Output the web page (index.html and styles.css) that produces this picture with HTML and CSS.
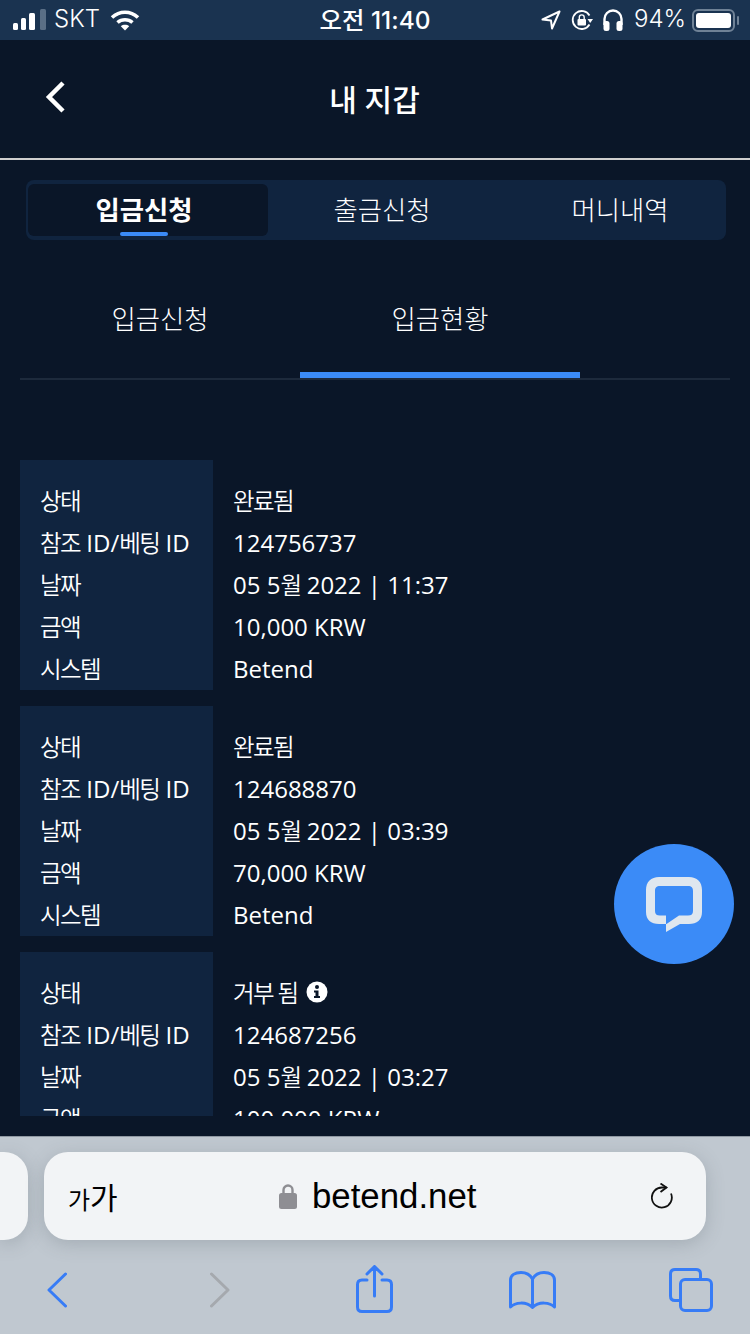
FILE: index.html
```html
<!DOCTYPE html>
<html lang="ko">
<head>
    <meta charset="UTF-8">
    <meta name="viewport" content="width=device-width, initial-scale=1.0">
    <title>내 지갑</title>
    <link rel="stylesheet" href="styles.css">
</head>
<body>
<div class="phone">

    <div class="status">
        <div class="status-left">
            <svg class="signal" width="33" height="22" viewBox="0 0 33 22">
                <rect x="0" y="14" width="5" height="7" rx="1.5" fill="#fff"/>
                <rect x="8" y="9" width="5" height="12" rx="1.5" fill="#fff"/>
                <rect x="16" y="4" width="6" height="17" rx="1.5" fill="#fff"/>
                <rect x="27" y="0" width="6" height="21" rx="1.5" fill="#5a6f86"/>
            </svg>
            <span>SKT</span>
            <svg width="30" height="22" viewBox="0 0 30 22" fill="none" stroke="#fff" stroke-width="3.6">
                <path d="M2 8.500C9.500 1.500 20.500 1.500 28 8.500"/>
                <path d="M7.500 13.500C11.800 9.800 18.200 9.800 22.500 13.500"/>
                <path d="M15 21.500L10.800 17.200C13.300 15.300 16.700 15.300 19.200 17.200Z" fill="#fff" stroke="none"/>
            </svg>
        </div>
        <div class="status-time">오전 11:40</div>
        <div class="status-right">
            <svg width="20" height="20" viewBox="0 0 20 20" fill="none" stroke="#fff" stroke-width="2" stroke-linejoin="round">
                <path d="M18.500 1.500L1.500 9.500L10 10.500L11 18.500Z"/>
            </svg>
            <svg class="rotlock" width="22" height="22" viewBox="0 0 22 22" fill="none">
                <path d="M18.500 6.500A9 9 0 1 0 18.500 15.500" stroke="#fff" stroke-width="1.800"/>
                <path d="M16.500 10L22 10L19.200 14Z" fill="#fff"/>
                <rect x="6.500" y="10" width="8.500" height="6.500" rx="1" fill="#fff"/>
                <path d="M8.300 10V8.300A2.400 2.400 0 0 1 13.200 8.300V10" stroke="#fff" stroke-width="1.400"/>
            </svg>
            <svg class="phones" width="20" height="22" viewBox="0 0 20 22" fill="none">
                <path d="M1.500 16V10A8.500 8.500 0 0 1 18.500 10V16" stroke="#fff" stroke-width="2.400"/>
                <rect x="0.500" y="12" width="6" height="10" rx="2.500" fill="#fff"/>
                <rect x="13.500" y="12" width="6" height="10" rx="2.500" fill="#fff"/>
            </svg>
            <span class="percent">94%</span>
            <div class="battery"><div class="battery-fill"></div></div>
        </div>
    </div>

    <div class="page">
        <div class="header">
            <svg class="header-back" width="20" height="32" viewBox="0 0 20 32" fill="none" stroke="#fff" stroke-width="4.500">
                <path d="M18 2L4 16L18 30"/>
            </svg>
            <h1>내 지갑</h1>
        </div>

        <div class="tabs">
            <div class="tab tab-active">입금신청</div>
            <div class="tab tab-second">출금신청</div>
            <div class="tab tab-third">머니내역</div>
        </div>

        <div class="subtabs">
            <div class="subtab">입금신청</div>
            <div class="subtab subtab-active">입금현황</div>
        </div>

        <div class="records">
            <div class="record">
                <div class="record-labels">
                    <div><span class="ko">상태</span></div>
                    <div><span class="ko">참조</span> ID/<span class="ko">베팅</span> ID</div>
                    <div><span class="ko">날짜</span></div>
                    <div><span class="ko">금액</span></div>
                    <div><span class="ko">시스템</span></div>
                </div>
                <div class="record-values">
                    <div><span class="ko">완료됨</span></div>
                    <div>124756737</div>
                    <div>05 5<span class="ko">월</span> 2022 | 11:37</div>
                    <div>10,000 KRW</div>
                    <div>Betend</div>
                </div>
            </div>
            <div class="record">
                <div class="record-labels">
                    <div><span class="ko">상태</span></div>
                    <div><span class="ko">참조</span> ID/<span class="ko">베팅</span> ID</div>
                    <div><span class="ko">날짜</span></div>
                    <div><span class="ko">금액</span></div>
                    <div><span class="ko">시스템</span></div>
                </div>
                <div class="record-values">
                    <div><span class="ko">완료됨</span></div>
                    <div>124688870</div>
                    <div>05 5<span class="ko">월</span> 2022 | 03:39</div>
                    <div>70,000 KRW</div>
                    <div>Betend</div>
                </div>
            </div>
            <div class="record">
                <div class="record-labels">
                    <div><span class="ko">상태</span></div>
                    <div><span class="ko">참조</span> ID/<span class="ko">베팅</span> ID</div>
                    <div><span class="ko">날짜</span></div>
                    <div><span class="ko">금액</span></div>
                    <div><span class="ko">시스템</span></div>
                </div>
                <div class="record-values">
                    <div class="with-icon"><span class="ko">거부 됨</span>
                        <svg width="22" height="22" viewBox="0 0 22 22">
                            <circle cx="11" cy="11" r="10.500" fill="#fff"/>
                            <circle cx="11" cy="6" r="2" fill="#0a1628"/>
                            <path d="M8 9.500H12.500V15H14V17H8V15H9.500V11.500H8Z" fill="#0a1628"/>
                        </svg>
                    </div>
                    <div>124687256</div>
                    <div>05 5<span class="ko">월</span> 2022 | 03:27</div>
                    <div>100,000 KRW</div>
                    <div>Betend</div>
                </div>
            </div>
        </div>

        <div class="chat">
            <svg width="56" height="56" viewBox="0 0 56 56">
                <path fill="#dfe7ef" fill-rule="evenodd" d="M13 0H43C51 0 56 5 56 13V35C56 43 51 47 43 47H34L20 55V47H13C5 47 0 43 0 35V13C0 5 5 0 13 0ZM14 9C10.500 9 9 10.500 9 14V34C9 37 10.500 38.500 14 38.500H20V47L20.500 47L33 38.500H42C45.500 38.500 47 37 47 34V14C47 10.500 45.500 9 42 9Z"/>
            </svg>
        </div>
    </div>

    <div class="browser">
        <div class="url-row">
            <div class="prev-pill"></div>
            <div class="url-pill">
                <div class="url-size"><small>가</small>가</div>
                <div class="url-host">
                    <svg width="18" height="26" viewBox="0 0 18 26" fill="none">
                        <path d="M4.500 11V7A4.500 4.500 0 0 1 13.500 7V11" stroke="#8e8e93" stroke-width="2.400"/>
                        <rect x="0" y="10" width="18" height="16" rx="2.500" fill="#8e8e93"/>
                    </svg>
                    <span>betend.net</span>
                </div>
                <svg width="22" height="26" viewBox="0 0 22 26" fill="none" stroke="#111" stroke-width="1.800">
                    <path d="M15.500 4.500H11A10 10 0 1 0 20 10.500"/>
                    <path d="M9.500 0.500L15.500 4.500L9.500 9"/>
                </svg>
            </div>
        </div>
        <div class="nav">
            <svg class="nav-back" width="20" height="36" viewBox="0 0 20 36" fill="none" stroke="#377cf6" stroke-width="3" stroke-linecap="round" stroke-linejoin="round">
                <path d="M18.500 2L2 18L18.500 34"/>
            </svg>
            <svg class="nav-next" width="20" height="36" viewBox="0 0 20 36" fill="none" stroke="#a5a9ae" stroke-width="3" stroke-linecap="round" stroke-linejoin="round">
                <path d="M1.500 2L18 18L1.500 34"/>
            </svg>
            <svg class="nav-share" width="37" height="48" viewBox="0 0 37 48" fill="none" stroke="#377cf6" stroke-width="3" stroke-linecap="round" stroke-linejoin="round">
                <path d="M11 15H6C3 15 1.500 16.500 1.500 19.500V42C1.500 45 3 46.500 6 46.500H31C34 46.500 35.500 45 35.500 42V19.500C35.500 16.500 34 15 31 15H26"/>
                <path d="M18.500 31V2M11 9L18.500 1.500L26 9"/>
            </svg>
            <svg class="nav-book" width="47" height="38" viewBox="0 0 47 38" fill="none" stroke="#377cf6" stroke-width="3" stroke-linejoin="round">
                <path d="M23.500 8C21 3.500 17 1.500 12 1.500C6 1.500 1.500 4 1.500 9V36C6 31.500 17 30 23.500 36.500C30 30 41 31.500 45.500 36V9C45.500 4 41 1.500 35 1.500C30 1.500 26 3.500 23.500 8V36"/>
            </svg>
            <svg class="nav-tabs" width="44" height="44" viewBox="0 0 44 44" fill="none" stroke="#377cf6" stroke-width="3">
                <path d="M10.500 32.500H6C3 32.500 1.500 31 1.500 28V6C1.500 3 3 1.500 6 1.500H27C30 1.500 31.500 3 31.500 6V10.500"/>
                <rect x="11.500" y="11.500" width="31" height="31" rx="4.500"/>
            </svg>
        </div>
    </div>

</div>
</body>
</html>
```

FILE: styles.css
```css
* {
    box-sizing: border-box;
}
body {
    margin: 0;
    background-color: #0a1628;
    color: #fff;
    font-family: "Open Sans", "Noto Sans CJK KR", sans-serif;
    font-size: 24px;
}
.phone {
    width: 750px;
    height: 1334px;
    display: flex;
    flex-direction: column;
    overflow: hidden;
}

/* status bar */
.status {
    height: 40px;
    flex: none;
    padding: 0 12px 0 13px;
    background-color: #1a3350;
    display: grid;
    grid-template-columns: 1fr auto 1fr;
    align-items: center;
    font-family: "Inter", "Noto Sans CJK KR", sans-serif;
    font-size: 24px;
}
.status-left {
    display: flex;
    align-items: center;
    gap: 8px;
}
.status-left span {
    margin-right: 2px;
    margin-bottom: 3px;
    font-weight: 300;
}
.status-time {
    font-size: 24.4px;
    font-weight: 500;
    white-space: nowrap;
    margin: 0 1px 3px 0;
}
.status-right {
    display: flex;
    align-items: center;
    justify-content: flex-end;
    gap: 10px;
}
.percent {
    font-weight: 300;
    margin-left: 1px;
    margin-right: -4px;
    margin-bottom: 3px;
}
.battery {
    width: 43px;
    height: 23px;
    margin-right: 3px;
    border: 2px solid #6f8296;
    border-radius: 6px;
    padding: 2px;
    position: relative;
}
.battery::after {
    content: "";
    position: absolute;
    right: -6px;
    top: 5px;
    width: 2px;
    height: 9px;
    border-radius: 1px;
    background-color: #6f8296;
}
.battery-fill {
    width: 35px;
    height: 15px;
    background-color: #fff;
    border-radius: 3px;
}

/* page */
.page {
    flex: 1;
    min-height: 0;
    position: relative;
    display: flex;
    flex-direction: column;
    overflow: hidden;
}
.header {
    height: 120px;
    flex: none;
    border-bottom: 2px solid #cfcfcf;
    display: flex;
    align-items: center;
    justify-content: center;
    position: relative;
}
.header-back {
    position: absolute;
    left: 45px;
    top: 41px;
}
.header h1 {
    margin: 0 0 0 -1px;
    font-size: 30px;
    font-weight: 500;
    padding-bottom: 2px;
}

.tabs {
    flex: none;
    margin: 20px 24px 0 26px;
    height: 60px;
    padding: 4px 0 4px 2px;
    background-color: #10243f;
    border-radius: 8px;
    display: flex;
    font-size: 26.4px;
    font-weight: 300;
}
.tab {
    display: flex;
    align-items: center;
    justify-content: center;
    padding-bottom: 4px;
}
.tab-active {
    width: 240px;
    padding-right: 8px;
    background-color: #0a1628;
    border-radius: 6px;
    font-weight: 700;
    position: relative;
}
.tab-active::after {
    content: "";
    position: absolute;
    left: 92px;
    bottom: 0;
    width: 48px;
    height: 4px;
    border-radius: 2px;
    background-color: #3b8bf7;
}
.tab-second {
    width: 228px;
}
.tab-third {
    flex: 1;
    padding-left: 18px;
}

.subtabs {
    flex: none;
    margin: 20px 20px 0;
    display: flex;
    border-bottom: 2px solid #1d2a3c;
    font-size: 26.4px;
    font-weight: 300;
}
.subtab {
    width: 280px;
    height: 118px;
    padding: 4px 0 2px;
    border-bottom: 6px solid transparent;
    display: flex;
    align-items: center;
    justify-content: center;
}
.subtab-active {
    border-bottom-color: #3b8bf7;
}

.records {
    flex: none;
    height: 656px;
    margin: 80px 20px 0;
    overflow: hidden;
}
.ko {
    font-size: 23.5px;
    font-weight: 350;
    letter-spacing: -1.6px;
}
.record {
    display: flex;
    margin-bottom: 16px;
}
.record-labels {
    width: 193px;
    padding: 20px 0 0 20px;
    background-color: #10243f;
    margin-right: 20px;
}
.record-labels div,
.record-values div {
    height: 42px;
    line-height: 42px;
    white-space: nowrap;
}
.record-values {
    padding-top: 20px;
}
.record-values .with-icon {
    display: flex;
    align-items: center;
    gap: 8px;
}
.with-icon svg {
    margin-top: -3px;
}

.chat {
    position: absolute;
    left: 614px;
    top: 804px;
    width: 120px;
    height: 120px;
    border-radius: 50%;
    background-color: #3b8bf7;
    display: flex;
    align-items: center;
    justify-content: center;
    padding-top: 2px;
}

/* safari bars */
.browser {
    height: 198px;
    flex: none;
    background-color: #c0c8d0;
    border-top: 1px solid #8f98a2;
    font-family: "Liberation Sans", "Noto Sans CJK KR", sans-serif;
    color: #000;
}
.url-row {
    height: 88px;
    margin-top: 15px;
    display: flex;
    gap: 16px;
}
.prev-pill {
    width: 28px;
    background-color: #f2f4f6;
    border-radius: 0 24px 24px 0;
    box-shadow: 0 4px 18px rgba(80, 90, 100, 0.25);
}
.url-pill {
    width: 662px;
    padding: 0 33px 0 24px;
    background-color: #f2f4f6;
    border-radius: 24px;
    box-shadow: 0 4px 18px rgba(80, 90, 100, 0.25);
    display: flex;
    align-items: center;
    position: relative;
    justify-content: space-between;
}
.url-size {
    font-size: 30px;
}
.url-size small {
    font-size: 24px;
}
.url-host {
    display: flex;
    align-items: center;
    gap: 15px;
    font-size: 34.800px;
    position: absolute;
    left: 235px;
}
.nav {
    display: flex;
    align-items: flex-start;
    padding: 14px 0 0 47px;
    height: 94px;
}
.nav-back {
    margin-top: 18px;
}
.nav-next {
    margin-top: 18px;
    margin-left: 143px;
}
.nav-share {
    margin-top: 11px;
    margin-left: 126px;
}
.nav-book {
    margin-top: 17px;
    margin-left: 116px;
}
.nav-tabs {
    margin-top: 14px;
    margin-left: 113px;
}
```
